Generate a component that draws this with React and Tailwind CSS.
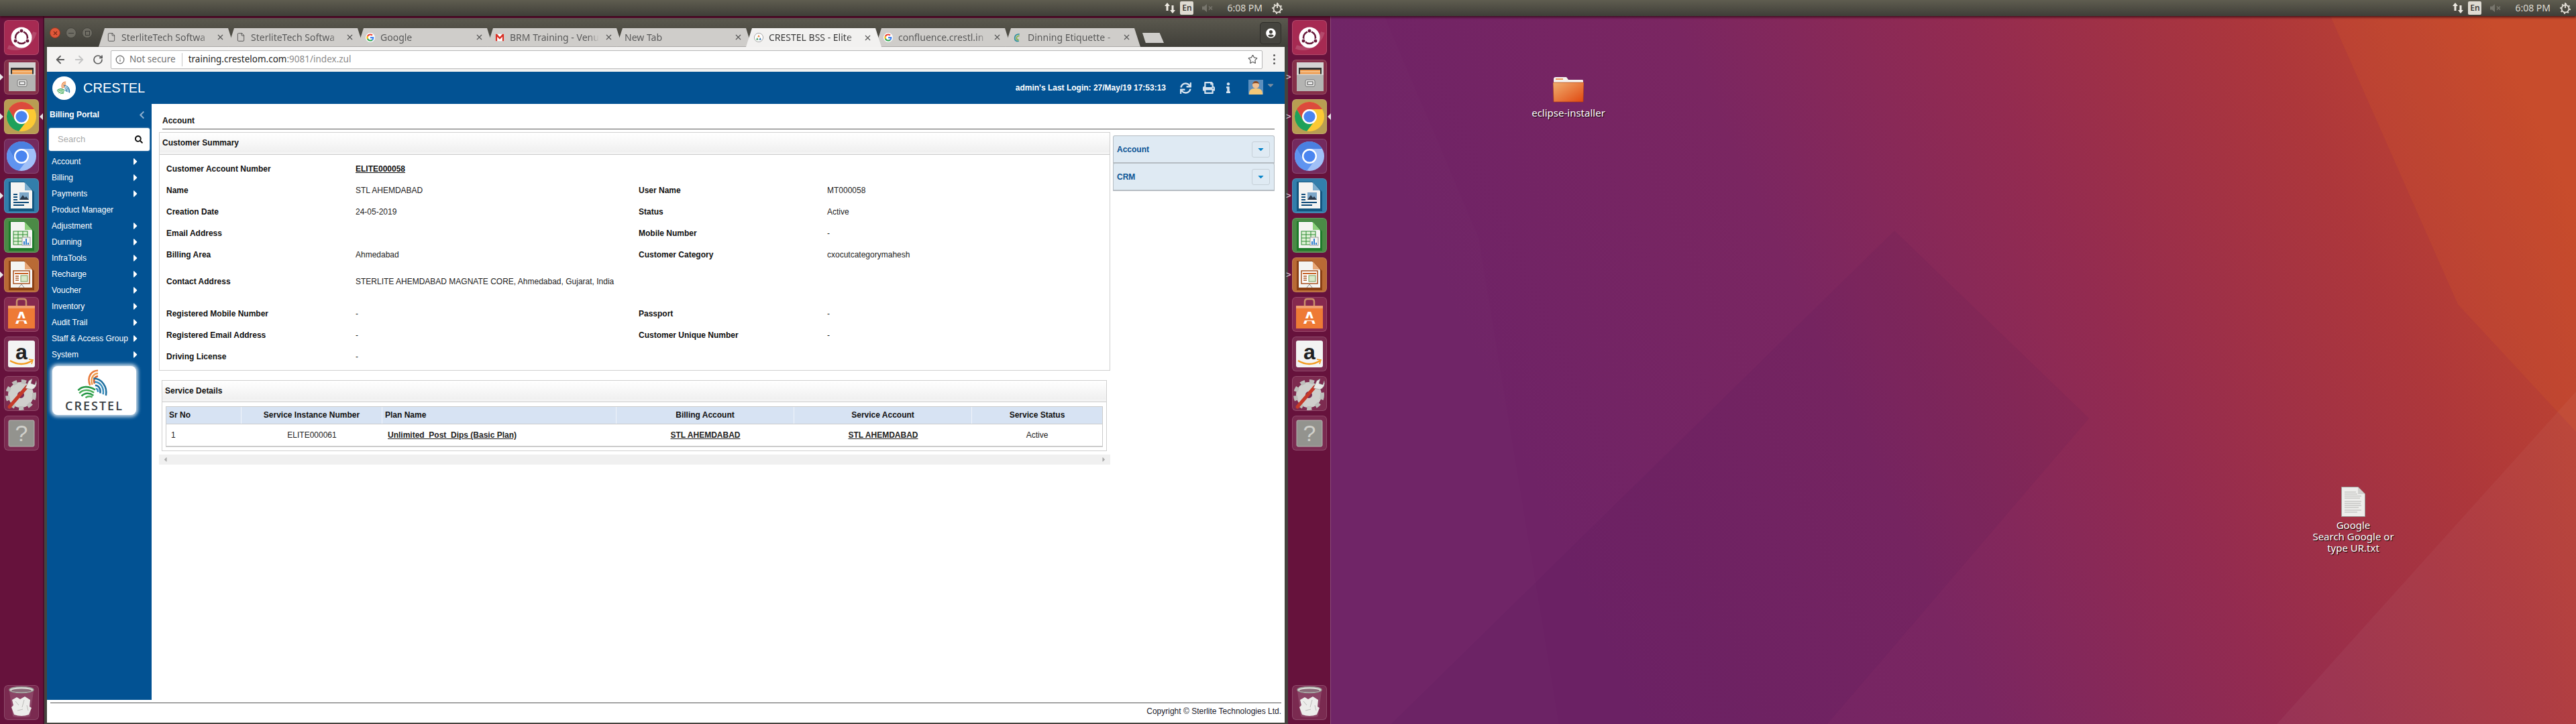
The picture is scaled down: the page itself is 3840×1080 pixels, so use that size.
import React from 'react';
import { ArrowLeft, ArrowRight, RotateCw, Star, Info, X, File } from 'lucide-react';
import { FaSync, FaPrint, FaInfo, FaSearch, FaCaretRight, FaCaretDown, FaChevronLeft, FaUserCircle } from 'react-icons/fa';

const ui = "[font-family:'Noto_Sans',sans-serif]";
const page = "[font-family:'Liberation_Sans',Arial,sans-serif]";

const menu = ['Account', 'Billing', 'Payments', 'Product Manager', 'Adjustment', 'Dunning', 'InfraTools', 'Recharge', 'Voucher', 'Inventory', 'Audit Trail', 'Staff & Access Group', 'System'];
const noArrow = ['Product Manager'];

const tabs = [
  { title: 'SterliteTech Softwa', icon: 'file' },
  { title: 'SterliteTech Softwa', icon: 'file' },
  { title: 'Google', icon: 'google' },
  { title: 'BRM Training - Venu', icon: 'gmail' },
  { title: 'New Tab' },
  { title: 'CRESTEL BSS - Elite', icon: 'crestel', active: true },
  { title: 'confluence.crestl.in', icon: 'google' },
  { title: 'Dinning Etiquette -', icon: 'swirl' },
];

const summary = [
  { a: 'Customer Account Number', b: 'ELITE000058', link: true },
  { a: 'Name', b: 'STL AHEMDABAD', c: 'User Name', d: 'MT000058' },
  { a: 'Creation Date', b: '24-05-2019', c: 'Status', d: 'Active' },
  { a: 'Email Address', b: '', c: 'Mobile Number', d: '-' },
  { a: 'Billing Area', b: 'Ahmedabad', c: 'Customer Category', d: 'cxocutcategorymahesh' },
  { a: 'Contact Address', b: 'STERLITE AHEMDABAD MAGNATE CORE, Ahmedabad, Gujarat, India', tall: true },
  { a: 'Registered Mobile Number', b: '-', c: 'Passport', d: '-' },
  { a: 'Registered Email Address', b: '-', c: 'Customer Unique Number', d: '-' },
  { a: 'Driving License', b: '-' },
];

const GoogleG = ({ size = 16 }) => (
  <svg width={size} height={size} viewBox="-6 -6 60 60">
    <circle cx="24" cy="24" r="30" fill="#fff" />
    <path fill="#EA4335" d="M24 9.5c3.54 0 6.71 1.22 9.21 3.6l6.85-6.85C35.9 2.38 30.47 0 24 0 14.62 0 6.51 5.38 2.56 13.22l7.98 6.19C12.43 13.72 17.74 9.5 24 9.5z" />
    <path fill="#4285F4" d="M46.98 24.55c0-1.57-.15-3.09-.38-4.55H24v9.02h12.94c-.58 2.96-2.26 5.48-4.78 7.18l7.73 6c4.51-4.18 7.09-10.36 7.09-17.65z" />
    <path fill="#FBBC05" d="M10.53 28.59c-.48-1.45-.76-2.99-.76-4.59s.27-3.14.76-4.59l-7.98-6.19C.92 16.46 0 20.12 0 24c0 3.88.92 7.54 2.56 10.78l7.97-6.19z" />
    <path fill="#34A853" d="M24 48c6.48 0 11.93-2.13 15.89-5.81l-7.73-6c-2.15 1.45-4.92 2.3-8.16 2.3-6.26 0-11.57-4.22-13.47-9.91l-7.98 6.19C6.51 42.62 14.62 48 24 48z" />
  </svg>
);

const TabIcon = ({ type }) => {
  if (type === 'file') return <File size={15} strokeWidth={1.4} className="text-[#444]" />;
  if (type === 'google') return <GoogleG />;
  if (type === 'gmail') return (
    <svg width="16" height="16" viewBox="0 0 16 16">
      <path d="M1 2h14v12H1z" fill="#fff" />
      <path d="M1 2h2.4L8 7l4.6-5H15v12h-2.6V6.5L8 11 3.6 6.5V14H1z" fill="#d93025" />
    </svg>
  );
  if (type === 'crestel') return (
    <svg width="16" height="16" viewBox="0 0 16 16">
      <circle cx="8" cy="8" r="7.5" fill="#fff" stroke="#999" />
      <path d="M8 3l2 4H6z" fill="#e0813a" />
      <path d="M5.5 8l2 4H3.5z" fill="#3a9a52" />
      <path d="M10.5 8l2 4h-4z" fill="#2f6ea8" />
    </svg>
  );
  return (
    <svg width="16" height="16" viewBox="0 0 16 16" fill="none">
      <path d="M11 2C6 2 3 5 3 9s3 6 7 5" stroke="#2f8f9d" strokeWidth="2" />
      <path d="M11 5C8 5 6 7 6 9s2 3 4 3" stroke="#7fb24a" strokeWidth="2" />
    </svg>
  );
};

const Tab = ({ title, icon, active }) => (
  <div className={`relative w-[202px] h-[28px] -mr-[9px] flex items-center gap-[8px] pl-[12px] pr-[12px] [clip-path:polygon(9px_0,calc(100%-9px)_0,100%_100%,0_100%)] ${active ? 'z-10 bg-[#f2f1f0] text-[#3c3c3c]' : 'bg-[#cfcdca] border-b border-[#a9a8a5] text-[#5a5a5a]'}`}>
    {icon && <span className="w-[14px] flex justify-center shrink-0"><TabIcon type={icon} /></span>}
    <span className={`flex-1 overflow-hidden whitespace-nowrap text-[14px] leading-[28px] [mask-image:linear-gradient(to_right,black_88%,transparent)] ${ui}`}>{title}</span>
    <X size={13} strokeWidth={2} className="shrink-0 mr-[2px] text-[#555]" />
  </div>
);

const Chrome = ({ red, green, yellow, blue }) => (
  <g>
    <circle cx="26" cy="26" r="22" fill={yellow} />
    <path d="M7 15A22 22 0 0 1 45 15L26 15A11 11 0 0 0 16.5 31.5Z" fill={red} />
    <path d="M7 15L16.5 31.5A11 11 0 0 0 31.5 35.5L22 47.7A22 22 0 0 1 7 15Z" fill={green} />
    <circle cx="26" cy="26" r="11" fill="#fff" />
    <circle cx="26" cy="26" r="8.6" fill={blue} />
  </g>
);

const DocPage = ({ fold, children, edge }) => (
  <g>
    <path d="M7 5H30L45 20V49H7Z" fill={edge} />
    <path d="M10 6H30L42 19V45H10Z" fill="#f4f4f2" />
    <path d="M31 6L42 18H31Z" fill={fold} />
    {children}
  </g>
);

const icons = {
  dash: (
    <g>
      <path d="M6 40C20 46 40 38 46 18" stroke="#ffffff" strokeOpacity=".15" strokeWidth="6" fill="none" />
      <circle cx="26" cy="26" r="15.5" fill="#fff" />
      <circle cx="26" cy="26" r="9" fill="none" stroke="#6a1b3c" strokeWidth="2.6" />
      <circle cx="26" cy="16" r="3" fill="#6a1b3c" stroke="#fff" />
      <circle cx="17" cy="31" r="3" fill="#6a1b3c" stroke="#fff" />
      <circle cx="35" cy="31" r="3" fill="#6a1b3c" stroke="#fff" />
    </g>
  ),
  files: (
    <g>
      <path d="M7 4H47L47 47H7Z" fill="#d4d4d2" />
      <path d="M10 12H44V24H10Z" fill="#333" />
      <path d="M12 15H42V24H12Z" fill="#ee9a4d" />
      <path d="M12 18H42" stroke="#fbe6c8" />
      <path d="M7 22H47V47H7Z" fill="#b4b4b2" />
      <path d="M7 22H47" stroke="#e8e8e6" />
      <rect x="20" y="30" width="14" height="10" rx="2" fill="#e4e4e2" stroke="#777" />
      <rect x="23" y="33" width="8" height="4" fill="#fff" stroke="#444" />
    </g>
  ),
  chrome: <Chrome red="#dc4a3c" green="#1da15a" yellow="#fcc934" blue="#4a85f0" />,
  chromium: <Chrome red="#4a80e0" green="#5f94f0" yellow="#a0c0f8" blue="#4a85f0" />,
  writer: (
    <DocPage fold="#7fb0d0" edge="#13557f">
      <path d="M14 24H20M14 28H20M14 32H20M14 36H37M14 40H30" stroke="#0d4a78" strokeWidth="2" />
      <rect x="23" y="21" width="14" height="11" fill="#7da7c8" />
      <path d="M23 32L28 25L31 29L33 27L37 32Z" fill="#2c3a4a" />
    </DocPage>
  ),
  calc: (
    <DocPage fold="#8ccf7c" edge="#1f7a2a">
      <g stroke="#2a8a30" fill="#dff2d6">
        <rect x="14" y="20" width="21" height="20" />
        <path d="M14 25H35M14 30H35M14 35H35M21 20V40M28 20V40" fill="none" />
      </g>
      <rect x="27" y="29" width="12" height="12" fill="#f4f4f2" stroke="#999" />
      <path d="M30 40V35M33 40V31M36 40V37" stroke="#2f7fd0" strokeWidth="2" />
    </DocPage>
  ),
  impress: (
    <DocPage fold="#e8a878" edge="#8a4015">
      <rect x="14" y="20" width="24" height="19" fill="#fff" stroke="#a8521f" strokeWidth="1.5" />
      <path d="M16 24H36" stroke="#c8642a" strokeWidth="2" />
      <path d="M17 28H22M17 31H22M17 34H22" stroke="#a8521f" strokeWidth="1.5" />
      <rect x="25" y="27" width="10" height="9" fill="#d8e8c8" stroke="#7a9a5a" />
      <path d="M22 45L26 40L30 45" stroke="#888" fill="none" />
    </DocPage>
  ),
  software: (
    <g>
      <path d="M19 13V7Q19 3 23 3H29Q33 3 33 7V13" stroke="#c9906a" strokeWidth="2.5" fill="none" />
      <path d="M6 13H46V47H6Z" fill="#ee7a35" />
      <path d="M6 13H46V17H6Z" fill="#f0a070" />
      <text x="26" y="40" textAnchor="middle" fontSize="26" fontWeight="700" fill="#fff" fontFamily="Liberation Sans">A</text>
      <rect x="16" y="32" width="20" height="3" fill="#ee7a35" />
    </g>
  ),
  amazon: (
    <g>
      <rect x="6" y="6" width="40" height="40" rx="3" fill="#f3f3f3" />
      <text x="26" y="34" textAnchor="middle" fontSize="32" fontWeight="700" fill="#222" fontFamily="Liberation Sans">a</text>
      <path d="M9 36Q26 46 42 36" stroke="#f39a1f" strokeWidth="2.4" fill="none" />
      <path d="M37 34L43 35L41 41" stroke="#f39a1f" strokeWidth="1.6" fill="none" />
    </g>
  ),
  settings: (
    <g>
      <circle cx="25" cy="28" r="12" fill="none" stroke="#cfcfcc" strokeWidth="14" />
      <circle cx="25" cy="28" r="20" fill="none" stroke="#bdbdba" strokeWidth="6" strokeDasharray="7 6.5" />
      <path d="M8 46L34 16" stroke="#c53a2a" strokeWidth="5" strokeLinecap="round" />
      <path d="M32 18L37 7L42 4L40 11L46 13L48 7Q50 16 42 20Z" fill="#e8e8e6" stroke="#888" strokeWidth=".5" />
    </g>
  ),
  help: (
    <g>
      <rect x="7" y="7" width="38" height="39" rx="2" fill="#93938e" stroke="#b4b4b0" />
      <text x="26" y="38" textAnchor="middle" fontSize="34" fill="#d0d0cb" fontFamily="Liberation Sans">?</text>
    </g>
  ),
  trash: (
    <g>
      <path d="M8 9L13 46Q14 48 26 48Q38 48 39 46L44 9Z" fill="#ffffff" fillOpacity=".13" />
      <ellipse cx="26" cy="7" rx="18" ry="4.5" fill="#d8d8d4" stroke="#9a9a96" strokeWidth="1.5" />
      <ellipse cx="26" cy="8" rx="15" ry="2.5" fill="#8a6a78" />
      <path d="M12 22L19 18L24 21L31 17L39 22L38 32L41 34L37 44Q26 48 15 44L11 33L14 30Z" fill="#ececea" />
      <path d="M17 24L22 30M30 22L27 33M20 38L28 36M34 30L36 38" stroke="#bdbdba" />
    </g>
  ),
};

const launcher = [
  { key: 'dash', bg: 'bg-[#a62a52]' },
  { key: 'files', bg: 'bg-[#853049]', pip: true },
  { key: 'chrome', bg: 'bg-[#b89d52]', pip: true, active: true },
  { key: 'chromium', bg: 'bg-[#742a5e]' },
  { key: 'writer', bg: 'bg-[#327eab]', pip: true },
  { key: 'calc', bg: 'bg-[#4b8a46]' },
  { key: 'impress', bg: 'bg-[#b96a35]', pip: true },
  { key: 'software', bg: 'bg-[#85294f]' },
  { key: 'amazon', bg: 'bg-[#7a2a50]' },
  { key: 'settings', bg: 'bg-[#7d2b50]' },
  { key: 'help', bg: 'bg-[#7a2a50]' },
];

const Tile = ({ item, second }) => (
  <div className={`relative w-[52px] h-[52px] rounded-[6px] border border-white/15 ${item.bg}`}>
    <svg width="52" height="52" viewBox="0 0 52 52" className="absolute -left-px -top-px">{icons[item.key]}</svg>
    {item.pip && !second && <span className="absolute -left-[7px] top-[20px] w-0 h-0 border-y-[5px] border-y-transparent border-l-[5px] border-l-[#e8e8e8]" />}
    {item.pip && second && <span className={`absolute -left-[10px] top-[18px] text-[#e8d8e0] text-[13px] leading-[14px] ${page}`}>&gt;</span>}
    {item.active && <span className="absolute -right-[7px] top-[20px] w-0 h-0 border-y-[5px] border-y-transparent border-r-[5px] border-r-[#e8e8e8]" />}
  </div>
);

const Launcher = ({ second }) => (
  <div className={`shrink-0 h-full flex flex-col items-start pt-[6px] pl-[6px] pb-[6px] gap-[7px] bg-[#66123c] ${second ? 'w-[64px] border-r border-[#8a4a7c]' : 'w-[66px] border-r-[2px] border-[#4a0e2c]'}`}>
    {launcher.map(item => <Tile key={item.key} item={item} second={second} />)}
    <div className="mt-auto">
      <Tile item={{ key: 'trash', bg: 'bg-[#7a2a50]' }} />
    </div>
  </div>
);

const Indicators = () => (
  <div className="w-[1920px] h-full flex items-center justify-end pr-[7px] text-[#dfdbd2]">
    <svg width="18" height="18" viewBox="0 0 18 18" fill="#eeeae2">
      <path d="M4 1L8 6H5.5V13H2.5V6H0Z" />
      <path d="M12 17L8 12H10.5V5H13.5V12H16Z" />
    </svg>
    <span className={`ml-[5px] w-[20px] h-[20px] rounded-[2px] bg-[#dfdbd2] text-[#3c3b37] text-[12px] leading-[20px] text-center font-semibold ${ui}`}>En</span>
    <svg className="ml-[13px]" width="18" height="14" viewBox="0 0 18 14" fill="#77756c">
      <path d="M0 4.5H3L7 1V13L3 9.5H0Z" />
      <path d="M10 4.5L15 9.5M15 4.5L10 9.5" stroke="#77756c" strokeWidth="1.6" />
    </svg>
    <span className={`ml-[19px] text-[14px] leading-[24px] ${ui}`}>6:08 PM</span>
    <svg className="ml-[13px]" width="18" height="18" viewBox="0 0 18 18" fill="none" stroke="#dfdbd2" strokeWidth="2">
      <circle cx="9" cy="10" r="5.5" />
      <circle cx="9" cy="10" r="7" strokeDasharray="2 3.5" />
      <path d="M9 1V9" />
    </svg>
  </div>
);

const Swoosh = ({ className }) => (
  <svg viewBox="0 0 64 52" fill="none" className={className}>
    <g stroke="#e8793a" strokeWidth="3">
      <path d="M24 28C18 14 26 2 38 2" />
      <path d="M28 27C24 16 30 7 38 7" stroke="#f09a4a" />
      <path d="M32 25C29 18 33 12 38 12" stroke="#d8602a" />
    </g>
    <g stroke="#1f6f9f" strokeWidth="3">
      <path d="M30 16C44 16 55 30 52 46" />
      <path d="M32 22C42 22 49 32 47 44" stroke="#3a8fbf" />
      <path d="M33 28C39 28 43 34 42 42" />
      <path d="M34 34C36 34 38 36 38 40" stroke="#3a8fbf" />
    </g>
    <g stroke="#2a9a4a" strokeWidth="3">
      <path d="M3 37C10 29 22 29 33 36" />
      <path d="M5 42C12 35 22 35 31 41" stroke="#4ab05a" />
      <path d="M9 47C15 41 23 41 30 46" />
      <path d="M16 50C20 47 24 47 28 49" stroke="#4ab05a" />
    </g>
  </svg>
);

const Label = ({ children }) => <span className="font-bold text-[#111]">{children}</span>;

const panelHead = 'border-b border-[#cccccc] px-[4px] bg-linear-to-b from-white to-[#eeeeee] shadow-[inset_0_-3px_0_#f4f4f4] font-bold text-[#111]';

const Summary = () => (
  <div className="h-[356px] border border-[#d0d0d0] flex flex-col">
    <div className={`h-[33px] shrink-0 leading-[31px] ${panelHead}`}>Customer Summary</div>
    <div className="pt-[5px] pl-[10px]">
      {summary.map(r => (
        <div key={r.a} className={`flex items-center text-[#222] ${r.tall ? 'h-[56px] pb-[8px]' : 'h-[32px]'}`}>
          <div className="w-[282px]"><Label>{r.a}</Label></div>
          <div className="w-[422px] whitespace-nowrap">
            {r.link ? <span className="font-bold underline text-[#111]">{r.b}</span> : r.b}
          </div>
          {r.c && <div className="w-[281px]"><Label>{r.c}</Label></div>}
          {r.c && <div>{r.d}</div>}
        </div>
      ))}
    </div>
  </div>
);

const cols = [
  { name: 'Sr No', w: 'w-[112px]', head: 'pl-[4px]', cell: 'pl-[7px]', value: '1' },
  { name: 'Service Instance Number', w: 'w-[210px]', head: 'text-center', cell: 'text-center', value: 'ELITE000061' },
  { name: 'Plan Name', w: 'w-[349px]', head: 'pl-[4px]', cell: 'pl-[8px] font-bold underline', value: 'Unlimited_Post_Dips (Basic Plan)' },
  { name: 'Billing Account', w: 'w-[265px]', head: 'text-center', cell: 'text-center font-bold underline', value: 'STL AHEMDABAD' },
  { name: 'Service Account', w: 'w-[265px]', head: 'text-center', cell: 'text-center font-bold underline', value: 'STL AHEMDABAD' },
  { name: 'Service Status', w: 'flex-1', head: 'text-center', cell: 'text-center', value: 'Active' },
];

const ServiceDetails = () => (
  <div className="ml-[4px] w-[1409px] h-[106px] border border-[#d0d0d0]">
    <div className={`h-[32px] leading-[30px] ${panelHead}`}>Service Details</div>
    <div className="mx-[5px] mt-[6px] border border-[#cccccc] border-b-[2px] h-[61px] flex flex-col">
      <div className="h-[26px] flex bg-[#d7e3f3] border-b border-[#cccccc]">
        {cols.map(c => (
          <div key={c.name} className={`${c.w} ${c.head} leading-[25px] font-bold text-[#111] border-r border-[#f0f4fa] last:border-r-0`}>{c.name}</div>
        ))}
      </div>
      <div className="flex-1 flex items-center">
        {cols.map(c => (
          <div key={c.name} className={`${c.w} ${c.cell} text-[#222]`}>{c.value}</div>
        ))}
      </div>
    </div>
  </div>
);

const Accordion = ({ title }) => (
  <div className="h-[42px] -mb-px rounded-t-[3px] border border-[#b5bcc2] border-b-2 bg-[#dfeaf3] flex items-center justify-between pl-[5px] pr-[6px]">
    <span className="font-bold text-[#0b5394]">{title}</span>
    <span className="w-[27px] h-[24px] rounded-[3px] border border-[#c6d0d8] flex items-center justify-center text-[#0a85c9]"><FaCaretDown size={13} /></span>
  </div>
);

const ChromeWindow = () => (
  <div className={`w-[1854px] h-[1053px] mt-[3px] shrink-0 flex flex-col bg-[#45443e] pl-[4px] pr-[5px] pb-[2px] border-t border-[#6a685e]`}>
    <div className="h-[42px] -ml-[4px] -mr-[5px] shrink-0 flex items-end bg-linear-to-b from-[#5a584e] to-[#403f39]">
      <div className="self-start mt-[13px] ml-[8px] flex gap-[8px]">
        <span className="w-[16px] h-[16px] rounded-full bg-[#e0583a] border border-[#9a3a22] flex items-center justify-center"><X size={9} strokeWidth={3} className="text-[#7a2a16]" /></span>
        <span className="w-[16px] h-[16px] rounded-full bg-[#6e6c63] border border-[#45443e] flex items-center justify-center"><span className="w-[8px] h-px bg-[#3c3b37]" /></span>
        <span className="w-[16px] h-[16px] rounded-full bg-[#6e6c63] border border-[#45443e] flex items-center justify-center"><span className="w-[7px] h-[7px] border border-[#3c3b37]" /></span>
      </div>
      <div className="ml-[9px] flex items-end">
        {tabs.map((t, i) => <Tab key={i} {...t} />)}
      </div>
      <div className="ml-[12px] mb-[6px] w-[32px] h-[15px] bg-[#cfcdca] [clip-path:polygon(0_0,80%_0,100%_100%,15%_100%)]" />
      <div className="ml-auto mr-[10px] self-start mt-[5px] w-[32px] h-[33px] rounded-[5px] border border-[#2f2e2a] bg-[#45443e] flex items-center justify-center">
        <FaUserCircle size={15} className="text-white" />
      </div>
    </div>
    <div className="flex-1 min-h-0 flex flex-col bg-white">
      <div className="h-[37px] shrink-0 bg-[#f4f3f2] flex items-center pl-[11px] pr-[14px]">
        <ArrowLeft size={18} strokeWidth={2.4} className="text-[#5a5a5a]" />
        <ArrowRight size={18} strokeWidth={2.4} className="ml-[10px] text-[#c4c4c4]" />
        <RotateCw size={16} strokeWidth={2.6} className="ml-[11px] text-[#5a5a5a]" />
        <div className={`ml-[11px] flex-1 h-[28px] rounded-[2px] border border-[#b8b8b8] bg-white flex items-center pl-[6px] pr-[6px] text-[13.5px] ${ui}`}>
          <Info size={14} className="text-[#666]" />
          <span className="ml-[7px] text-[#6f6f6f]">Not secure</span>
          <span className="ml-[9px] w-px h-[20px] bg-[#c8c8c8]" />
          <span className="ml-[9px] text-[#222]">training.crestelom.com<span className="text-[#8a8a8a]">:9081/index.zul</span></span>
          <Star size={15} strokeWidth={1.8} className="ml-auto text-[#555]" />
        </div>
        <span className="ml-[16px] flex flex-col gap-[3px]">
          <span className="w-[3px] h-[3px] rounded-full bg-[#555]" />
          <span className="w-[3px] h-[3px] rounded-full bg-[#555]" />
          <span className="w-[3px] h-[3px] rounded-full bg-[#555]" />
        </span>
      </div>

      <div className={`flex-1 min-h-0 flex flex-col text-[12px] ${page}`}>
        <div className="h-[48px] shrink-0 bg-[#025293] flex items-center pl-[8px] pr-[14px] text-white">
          <span className="w-[35px] h-[35px] rounded-full bg-white flex items-center justify-center"><Swoosh className="w-[24px] h-[24px]" /></span>
          <span className="ml-[11px] text-[20px]">CRESTEL</span>
          <span className="ml-auto font-bold">admin's Last Login: 27/May/19 17:53:13</span>
          <FaSync size={17} className="ml-[21px] text-[#d5e2ee]" />
          <FaPrint size={18} className="ml-[17px] text-[#d5e2ee]" />
          <FaInfo size={16} className="ml-[12px] text-[#d5e2ee]" />
          <span className="ml-[22px] w-[22px] h-[22px] bg-[#5d8fbd] overflow-hidden relative mb-[2px]">
            <span className="absolute left-[6px] top-[2px] w-[10px] h-[11px] rounded-full bg-[#f0c090] border-t-[3px] border-[#8a4a22]" />
            <span className="absolute left-[1px] top-[13px] w-[20px] h-[12px] rounded-t-[7px] bg-[#f4c878]" />
          </span>
          <FaCaretDown size={14} className="ml-[4px] mb-[8px] text-[#7a8da0]" />
        </div>

        <div className="h-[889px] shrink-0 flex">
          <div className="w-[156px] shrink-0 bg-[#025293] text-white pl-[4px]">
            <div className="h-[32px] pr-[8px] flex items-center justify-between font-bold">
              <span>Billing Portal</span>
              <FaChevronLeft size={13} className="text-[#8fb0cf]" />
            </div>
            <div className="mt-[4px] w-[150px] h-[34px] -ml-px rounded-[3px] bg-white flex items-center justify-between pl-[13px] pr-[10px] shadow-[0_0_2px_#cfd8e0]">
              <span className="text-[#aaa] text-[13px]">Search</span>
              <FaSearch size={12} className="text-[#111]" />
            </div>
            <div className="mt-[4px] pl-[3px]">
              {menu.map(m => (
                <div key={m} className="h-[24px] flex items-center">
                  <span className="w-[117px] whitespace-nowrap">{m}</span>
                  {!noArrow.includes(m) && <FaCaretRight size={16} />}
                </div>
              ))}
            </div>
            <div className="mt-[5px] ml-[4px] w-[125px] h-[73px] rounded-[8px] bg-white shadow-[0_0_5px_3px_rgba(255,255,255,.75)] flex flex-col items-center pt-[5px]">
              <Swoosh className="w-[60px] h-[44px]" />
              <span className="text-[18px] leading-[20px] font-semibold tracking-[2px] text-[#3a3f44] [font-family:'Open_Sans',sans-serif]">CRESTEL</span>
            </div>
          </div>

          <div className="flex-1 min-w-0 pl-[11px]">
            <div className="ml-[5px] mr-[15px] h-[38px] border-b border-[#555] font-bold text-[#111] leading-[50px]">Account</div>
            <div className="mt-[4px] flex gap-[4px]">
              <div className="w-[1418px] shrink-0">
                <Summary />
                <div className="mt-[14px]"><ServiceDetails /></div>
                <div className="mt-[5px] h-[15px] bg-[#f0f0f0] flex items-center justify-between px-[4px] text-[#aaa]">
                  <FaCaretRight size={11} className="rotate-180" />
                  <FaCaretRight size={11} />
                </div>
              </div>
              <div className="w-[241px] shrink-0 mt-[5px]">
                <Accordion title="Account" />
                <Accordion title="CRM" />
              </div>
            </div>
          </div>
        </div>

        <div className="flex-1 px-[5px] text-[#111]">
          <div className="mt-[4px] border-t border-[#555] text-right text-[#1a1a2a] leading-[24px] text-[12px]">Copyright © Sterlite Technologies Ltd.</div>
        </div>
      </div>
    </div>
  </div>
);

const Wallpaper = () => (
  <svg className="absolute inset-0" width="1856" height="1056" viewBox="0 0 1856 1056">
    <defs>
      <linearGradient id="wp" gradientUnits="userSpaceOnUse" x1="300" y1="700" x2="1750" y2="50">
        <stop offset="0" stopColor="#6f2366" />
        <stop offset=".3" stopColor="#7a2661" />
        <stop offset=".55" stopColor="#932b50" />
        <stop offset=".8" stopColor="#ad373b" />
        <stop offset="1" stopColor="#c4482d" />
      </linearGradient>
    </defs>
    <rect width="1856" height="1056" fill="url(#wp)" />
    <path d="M1490 0H1856V620L1680 430Z" fill="#d8592a" fillOpacity=".22" />
    <path d="M90 1056L840 320L1130 600L740 1056Z" fill="#3c0f50" fillOpacity=".07" />
    <path d="M1410 1056L1856 560V1056Z" fill="#ffffff" fillOpacity=".04" />
    <path d="M0 0H80L220 330L340 1056H0Z" fill="#ffffff" fillOpacity=".012" />
  </svg>
);

const DesktopLabel = ({ children }) => (
  <span className={`text-white text-[15px] leading-[17px] text-center [text-shadow:1px_1px_1px_#000] ${ui}`}>{children}</span>
);

const Desktop = () => (
  <div className="relative flex-1 h-full overflow-hidden">
    <Wallpaper />
    <div className="absolute left-[271px] top-[91px] w-[166px] flex flex-col items-center">
      <svg width="46" height="38" viewBox="0 0 46 38">
        <path d="M1 3Q1 0 4 0H20L23 4H44Q45 4 45 6V12H1Z" fill="#f4f2ee" />
        <path d="M4 3H15" stroke="#ee9a5a" strokeWidth="2" />
        <defs>
          <linearGradient id="fold" x1="0" y1="0" x2="1" y2="1">
            <stop offset="0" stopColor="#f0b070" />
            <stop offset="1" stopColor="#e0470f" />
          </linearGradient>
        </defs>
        <path d="M0 8H46L45 37H1Z" fill="url(#fold)" stroke="#a83a12" strokeWidth=".6" />
      </svg>
      <span className="mt-[3px]"><DesktopLabel>eclipse-installer</DesktopLabel></span>
    </div>
    <div className="absolute left-[1424px] top-[702px] w-[200px] flex flex-col items-center">
      <svg width="36" height="45" viewBox="0 0 36 45">
        <path d="M.5.5H25L35.5 11V44.5H.5Z" fill="#ededeb" stroke="#9a9a98" />
        <path d="M25 .5V11H35.5Z" fill="#d0d0ce" />
        <path d="M5 8H22M5 11H24M5 14H30M5 17H28M5 22H30M5 25H29M5 28H30M5 31H26M5 35H30M5 38H24" stroke="#a8a8a6" strokeWidth=".8" />
      </svg>
      <span className="mt-[4px] flex flex-col items-center">
        <DesktopLabel>Google</DesktopLabel>
        <DesktopLabel>Search Google or</DesktopLabel>
        <DesktopLabel>type UR.txt</DesktopLabel>
      </span>
    </div>
  </div>
);

export default function App() {
  return (
    <div className="w-[3840px] h-[1080px] overflow-hidden flex flex-col bg-[#66123c]">
      <div className="relative z-20 h-[24px] shrink-0 flex bg-linear-to-b from-[#5f5d50] to-[#3f3e38] shadow-[0_2px_3px_rgba(40,0,10,.7)]">
        <Indicators />
        <Indicators />
      </div>
      <div className="h-[1056px] flex">
        <Launcher />
        <ChromeWindow />
        <Launcher second />
        <Desktop />
      </div>
    </div>
  );
}
